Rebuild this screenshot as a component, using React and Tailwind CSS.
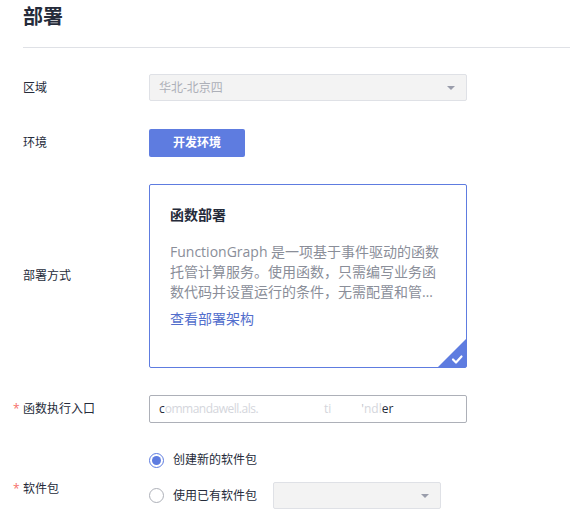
import { useState } from 'react';

const FONT = { fontFamily: '"Open Sans", "Noto Sans CJK SC", sans-serif' };

const Caret = () => (
  <svg width="10" height="6" viewBox="0 0 10 6" className="shrink-0">
    <path d="M1 1h8L5 5z" fill="#9a9dab" />
  </svg>
);

const Label = ({ children, required }) => (
  <div className="w-[126px] shrink-0 flex items-center text-[12px] text-[#252b3a]">
    {required && <span className="-ml-[10px] w-[10px] text-[#f66f6a]">*</span>}
    {children}
  </div>
);

const Radio = ({ checked, onClick, children }) => (
  <button onClick={onClick} className="flex items-center gap-[9px] text-[12px] text-[#252b3a]">
    <span
      className={`w-[15px] h-[15px] rounded-full border flex items-center justify-center bg-white ${
        checked ? 'border-[#5e7ce0]' : 'border-[#adb0b8]'
      }`}
    >
      {checked && <span className="w-[9px] h-[9px] rounded-full bg-[#5e7ce0]" />}
    </span>
    {children}
  </button>
);

export default function App() {
  const [pkg, setPkg] = useState('new');

  return (
    <div className="w-[570px] h-[528px] bg-white overflow-hidden" style={FONT}>
      {/* header */}
      <div className="ml-[23px] h-[48px] border-b border-[#dfe1e6]">
        <h1 className="pt-[2px] text-[20px] leading-[30px] font-bold text-[#252b3a]">部署</h1>
      </div>

      <div className="pl-[23px] flex flex-col">
        {/* region */}
        <div className="flex mt-[26px] h-[27px]">
          <Label>区域</Label>
          <div className="w-[318px] h-[27px] bg-[#f3f3f3] border border-[#dfe1e6] rounded-[2px] flex items-center justify-between pl-[9px] pr-[10px] text-[12px] text-[#adb0b8]">
            <span>华北-北京四</span>
            <Caret />
          </div>
        </div>

        {/* environment */}
        <div className="flex mt-[28px] h-[28px]">
          <Label>环境</Label>
          <button className="w-[96px] h-[28px] bg-[#5e7ce0] rounded-[2px] text-white text-[12px] font-semibold">
            开发环境
          </button>
        </div>

        {/* deploy mode */}
        <div className="flex mt-[27px]">
          <Label>部署方式</Label>
          <div className="relative w-[318px] h-[184px] border border-[#5e7ce0] rounded-[2px] px-[20px] pt-[20px]">
            <div className="text-[14px] leading-[20px] font-semibold text-[#252b3a]">函数部署</div>
            <p className="mt-[17px] text-[14px] leading-[20px] text-[#8a8e99] line-clamp-3">
              FunctionGraph 是一项基于事件驱动的函数托管计算服务。使用函数，只需编写业务函数代码并设置运行的条件，无需配置和管理服务器等基础设施。
            </p>
            <a className="block mt-[7px] text-[14px] leading-[20px] text-[#526ecc]">查看部署架构</a>
            <svg width="28" height="28" viewBox="0 0 28 28" className="absolute right-0 bottom-0">
              <path d="M28 0V28H0z" fill="#5e7ce0" />
              <path d="M15 20.5l3 3 5.5-6" stroke="#fff" strokeWidth="2.2" fill="none" strokeLinecap="round" strokeLinejoin="round" />
            </svg>
          </div>
        </div>

        {/* handler */}
        <div className="flex mt-[27px] h-[28px]">
          <Label required>函数执行入口</Label>
          <div className="w-[318px] h-[28px] border border-[#adb0b8] rounded-[2px] flex items-center pl-[9px] text-[12px] text-[#252b3a] overflow-hidden whitespace-nowrap">
            <span>c</span>
            <span className="text-[#d4d6dc] tracking-[-0.5px]">ommandawell.als.</span>
            <span className="w-[66px]" />
            <span className="text-[#d4d6dc]">ti</span>
            <span className="w-[30px]" />
            <span className="text-[#c0c3ca]">'</span>
            <span className="text-[#d4d6dc]">ndl</span>
            <span>er</span>
          </div>
        </div>

        {/* package */}
        <div className="flex items-start mt-[26px]">
          <div className="mt-[31px]">
            <Label required>软件包</Label>
          </div>
          <div className="flex flex-col gap-[11px]">
            <div className="h-[22px] flex items-center">
              <Radio checked={pkg === 'new'} onClick={() => setPkg('new')}>创建新的软件包</Radio>
            </div>
            <div className="flex items-center gap-[16px]">
              <Radio checked={pkg === 'old'} onClick={() => setPkg('old')}>使用已有软件包</Radio>
              <div className="w-[168px] h-[27px] bg-[#f3f3f3] border border-[#dfe1e6] rounded-[2px] flex items-center justify-end pr-[10px]">
                <Caret />
              </div>
            </div>
          </div>
        </div>
      </div>
    </div>
  );
}
